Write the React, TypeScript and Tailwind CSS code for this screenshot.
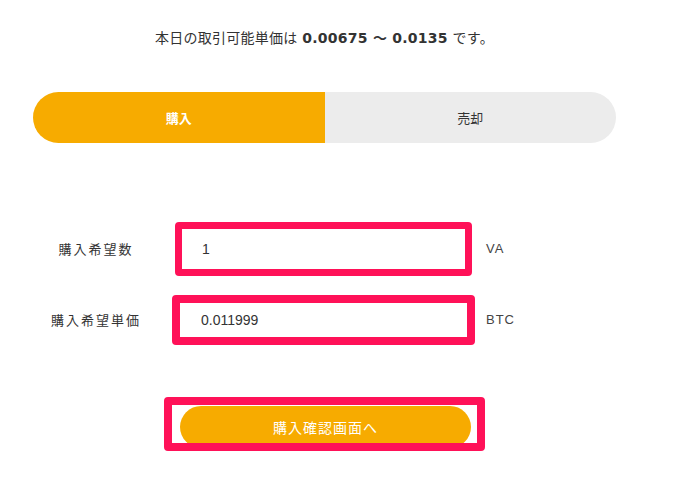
import React from 'react';

const jp = "font-['DejaVu_Sans','Noto_Sans_CJK_JP',sans-serif]";

const App: React.FC = () => (
  <div className="min-h-screen bg-white">
    <div className={`w-[583px] ml-[33px] flex flex-col ${jp}`}>
      {/* Price range */}
      <p className="mt-[28px] h-[20px] leading-[20px] text-center text-[14px] tracking-[0.25px] text-[#333]">
        本日の取引可能単価は <strong className="font-bold">0.00675 〜 0.0135</strong> です。
      </p>

      {/* Buy / sell tabs */}
      <div className="mt-[44px] flex h-[51px] rounded-full overflow-hidden text-[13px] font-['Noto_Sans_CJK_JP',sans-serif]">
        <button className="flex-1 bg-[#f7ab00] text-white font-bold">購入</button>
        <button className="flex-1 bg-[#ececec] text-[#333]">売却</button>
      </div>

      {/* Quantity */}
      <div className="mt-[79px] flex items-center">
        <label className="w-[126px] text-center text-[13px] tracking-[2px] text-[#333] font-['Noto_Sans_CJK_JP',sans-serif]">
          購入希望数
        </label>
        <div className="ml-[16px] w-[297px] h-[54px] border-[7px] border-[#ff1158] rounded-[4px] bg-white flex items-center pl-[20px]">
          <span className="text-[14px] text-[#333] font-['Liberation_Sans',sans-serif]">1</span>
        </div>
        <span className="ml-[14px] text-[13px] tracking-[1px] text-[#444] font-['Liberation_Sans',sans-serif]">VA</span>
      </div>

      {/* Unit price */}
      <div className="mt-[19px] flex items-center">
        <label className="w-[126px] text-center text-[13px] tracking-[2px] text-[#333] font-['Noto_Sans_CJK_JP',sans-serif]">
          購入希望単価
        </label>
        <div className="ml-[13px] w-[303px] h-[50px] border-[8px] border-[#ff1158] rounded-[4px] bg-white flex items-center pl-[21px]">
          <span className="text-[14px] text-[#333] font-['Liberation_Sans',sans-serif]">0.011999</span>
        </div>
        <span className="ml-[11px] text-[13px] tracking-[1px] text-[#444] font-['Liberation_Sans',sans-serif]">BTC</span>
      </div>

      {/* Confirm */}
      <div className="mt-[52px] mx-auto w-[321px] h-[54px] border-[8px] border-[#ff1158] rounded-[4px] overflow-hidden bg-white pl-[8px] pt-[1px]">
        <button className="w-[291px] h-[42px] rounded-full bg-[#f7ab00] text-white text-[14px] tracking-[1px] font-['Noto_Sans_CJK_JP',sans-serif]">
          購入確認画面へ
        </button>
      </div>
    </div>
  </div>
);

export default App;
